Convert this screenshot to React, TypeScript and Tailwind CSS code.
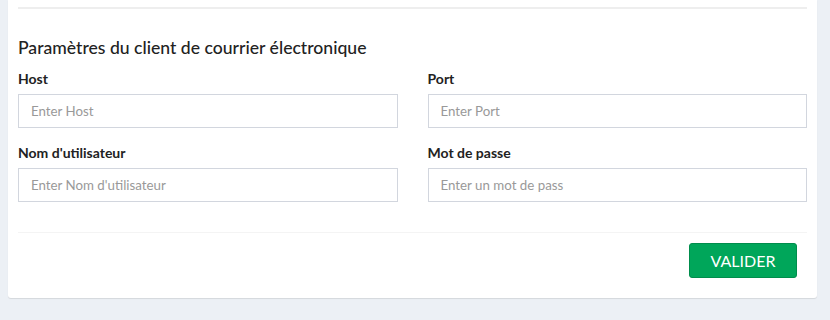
export default function App() {
  const fields = [
    { label: 'Host', placeholder: 'Enter Host' },
    { label: 'Port', placeholder: 'Enter Port' },
    { label: "Nom d'utilisateur", placeholder: "Enter Nom d'utilisateur" },
    { label: 'Mot de passe', placeholder: 'Enter un mot de pass' },
  ];

  return (
    <div className="h-[320px] bg-[#ecf0f5] pl-2 pr-[13px]" style={{ fontFamily: 'Lato, "Open Sans", sans-serif' }}>
      <div className="bg-white rounded-b-[3px] shadow-[0_1px_1px_rgba(0,0,0,0.1)]">
        <div className="pl-[10px] pr-[10px]">
          <div className="pt-[7px]">
            <div className="h-[2px] bg-[#eeeeee]"></div>
          </div>
          <h3 className="mt-[27px] text-[17.6px] leading-[24px] font-medium text-[#222]">
            Paramètres du client de courrier électronique
          </h3>
          <div className="grid grid-cols-2 gap-x-[30px] gap-y-4 mt-[10px]">
            {fields.map((f) => (
              <div key={f.label}>
                <label className="block text-[14px] leading-[18px] font-bold text-[#222] mb-[6px]">{f.label}</label>
                <input
                  type="text"
                  placeholder={f.placeholder}
                  className="w-full h-[34px] px-3 border border-[#d2d6de] text-[13.3px] text-[#555] placeholder:text-[#999] outline-none"
                />
              </div>
            ))}
          </div>
          <div className="mt-[30px] h-px bg-[#f4f4f4]"></div>
          <div className="flex justify-end pt-[10px] pb-[20px] pr-[10px]">
            <button className="w-[108px] h-[35px] bg-[#00a65a] border border-[#008d4c] rounded-[3px] text-white text-[16px]">
              VALIDER
            </button>
          </div>
        </div>
      </div>
    </div>
  );
}
